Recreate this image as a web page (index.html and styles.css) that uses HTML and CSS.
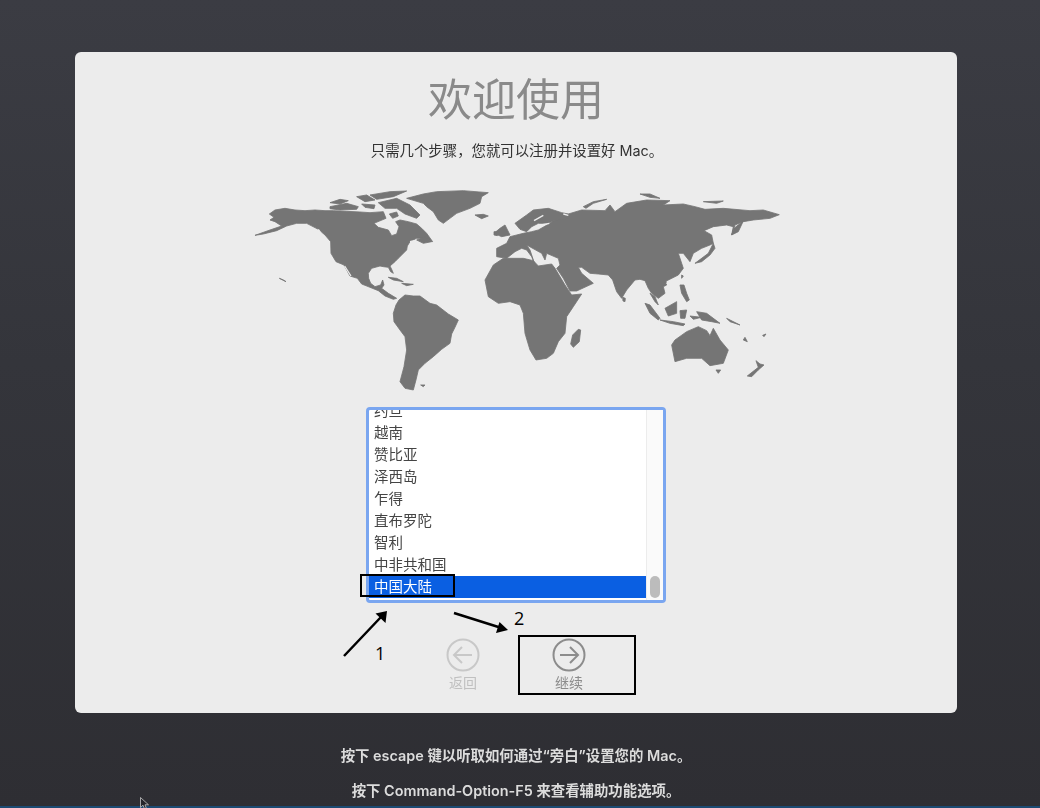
FILE: index.html
```html
<!DOCTYPE html>
<html lang="zh-CN">
<head>
<meta charset="utf-8">
<title>欢迎使用</title>
<link rel="stylesheet" href="styles.css">
</head>
<body>
<main class="card">
  <h1 class="title">欢迎使用</h1>
  <p class="subtitle">只需几个步骤，您就可以注册并设置好 Mac。</p>
  <svg class="map" viewBox="250 190 532 210" width="532" height="210" aria-hidden="true">
    <g transform="translate(250 190) scale(.3333)">
      <path d="M58 72L75 60L105 55L135 60L165 62L195 60L225 62L250 62L290 64L330 66L360 68L400 65L408 85L372 100L385 112L415 120L425 137L440 132L447 110L437 95L450 90L475 95L500 102L515 115L530 130L548 155L525 145L500 145L480 155L472 168L470 180L445 205L435 215L420 228L425 238L430 250L422 245L415 232L400 230L390 228L365 235L355 250L356 265L362 280L375 290L392 285L398 270L402 285L395 295L415 310L440 325L430 328L405 318L385 302L360 292L335 282L322 265L300 258L282 225L258 215L243 190L242 155L225 135L205 118L170 100L140 100L110 108L80 122L40 132L15 136L60 120L95 108L75 95L60 90L72 82Z"/>
      <path class="cut" d="M284 228L303 258M480 155L510 148M205 118L213 130"/>
      <path d="M240 38L270 28L295 32L270 42ZM240 50L290 40L325 50L320 58L270 60L240 56ZM320 20L350 15L375 30L345 35ZM360 15L420 5L470 3L430 20L380 28ZM385 38L440 25L480 45L510 75L500 85L465 72L440 55L405 55ZM335 42L375 45L372 56L345 52ZM418 72L440 66L445 78L428 85Z"/>
      <path d="M470 25L520 12L560 5L640 2L715 8L695 20L690 40L660 55L620 70L580 100L565 90L550 65L530 50L520 40ZM675 75L700 73L715 78L695 86ZM500 150L525 140L545 155L520 160ZM415 262L440 265L460 275L430 270ZM455 280L490 283L470 287ZM88 265L108 275L100 270Z"/>
      <path d="M430 370L438 345L447 330L465 315L490 318L510 318L540 340L560 345L595 372L625 390L615 412L605 432L600 460L575 478L550 500L525 520L505 540L498 570L490 600L465 595L450 575L462 530L470 480L465 440L450 420L432 395ZM512 585L525 585L520 590Z"/>
    </g>
    <g transform="translate(510 190) scale(.3333)">
      <path d="M-40 175L-10 160L0 140L40 130L65 125L85 120L120 100L140 85L175 72L215 60L285 62L300 45L315 65L350 40L410 30L480 32L460 45L520 42L555 50L585 58L640 55L720 62L760 60L808 74L780 85L730 90L700 95L675 105L665 135L670 110L650 105L610 110L582 122L605 135L610 160L600 165L575 175L550 190L540 215L520 190L505 190L515 220L520 235L505 255L465 275L470 285L460 290L465 310L445 325L425 310L415 295L405 272L390 268L375 270L350 300L335 325L320 305L308 270L295 255L265 252L240 250L215 232L205 232L215 250L250 280L200 303L180 303L160 265L140 235L150 225L145 205L110 190L105 210L95 190L50 165L60 180L75 225L65 200L50 180L35 175L15 185L-10 205L-40 200Z"/>
      <path d="M15 100L50 75L70 60L115 55L155 68L175 72L180 85L135 90L115 100L85 100L65 110L50 125L30 118Z"/>
      <path class="cut" d="M72 92L100 76M66 120L85 106L118 100M160 72L175 76"/>
      <path d="M-20 205L-50 225L-75 270L-65 320L-35 340L0 335L30 345L40 370L45 430L60 480L78 510L110 505L130 490L145 455L165 430L170 380L190 350L215 312L185 315L165 285L135 235L125 222L85 228L70 212L40 205L0 205Z"/>
      <path d="M-48 130L-30 115L-15 105L0 135L-25 140ZM-48 125L-35 125L-38 137L-48 135Z"/>
      <path d="M205 418L212 420L208 455L190 472L182 462L188 435ZM338 322L346 325L345 335L339 333Z"/>
      <path d="M220 50L250 35L290 28L250 40L228 55ZM580 35L640 33L620 40ZM390 12L420 12L450 25L420 22ZM555 220L595 190L610 160L615 175L600 195L575 215ZM665 135L672 115L700 93L685 125Z"/>
      <path d="M420 310L435 320L445 345L435 335ZM405 340L420 345L450 385L445 390L420 370ZM450 390L490 395L525 402L520 407L480 400ZM465 355L500 335L500 370L475 378ZM510 362L530 360L525 385L512 385ZM510 285L522 285L530 310L538 330L530 335L515 310ZM560 365L590 370L630 400L605 395L575 390ZM515 255L520 258L515 265ZM462 272L470 276L463 282ZM540 378L575 382L550 388ZM650 385L690 405L660 395ZM700 450L712 455L705 442ZM758 436L768 432L762 440Z"/>
      <path d="M485 465L495 450L530 425L565 410L590 422L600 437L610 415L630 450L655 480L640 520L600 527L575 505L530 505L495 515ZM618 540L632 540L625 550ZM738 512L750 522L762 525L745 540L725 560L712 558L745 532Z"/>
    </g>
  </svg>
  <div class="picker">
    <ul class="list">
      <li class="row">约旦</li>
      <li class="row">越南</li>
      <li class="row">赞比亚</li>
      <li class="row">泽西岛</li>
      <li class="row">乍得</li>
      <li class="row">直布罗陀</li>
      <li class="row">智利</li>
      <li class="row">中非共和国</li>
      <li class="row selected">中国大陆</li>
    </ul>
    <div class="track"><span class="thumb"></span></div>
  </div>
  <nav class="nav">
    <div class="step disabled">
      <svg class="circle" viewBox="0 0 34 34" width="34" height="34" aria-hidden="true"><circle cx="17" cy="17" r="15.5"/><path d="M26 17H8M16 9l-8 8 8 8"/></svg>
      <span class="step-label">返回</span>
    </div>
    <div class="step">
      <svg class="circle" viewBox="0 0 34 34" width="34" height="34" aria-hidden="true"><circle cx="17" cy="17" r="15.5"/><path d="M8 17H26M18 9l8 8-8 8"/></svg>
      <span class="step-label">继续</span>
    </div>
  </nav>
</main>
<footer class="hints">
  <p class="hint">按下 escape 键以听取如何通过“旁白”设置您的 Mac。</p>
  <p class="hint">按下 Command-Option-F5 来查看辅助功能选项。</p>
</footer>
<div class="strip"></div>

<div class="mark mark-row"></div>
<div class="mark mark-next"></div>
<svg class="arrows" viewBox="0 0 1040 808" width="1040" height="808" aria-hidden="true">
  <path class="arrow-line" d="M344 656L381 617M454 613L500 627.5"/>
  <path d="M387 611L385.5 623L375.5 613.5ZM508 630L496 633L499.5 622Z"/>
</svg>
<span class="num num-1">1</span>
<span class="num num-2">2</span>
<svg class="cursor" viewBox="0 0 12 14" width="12" height="14" aria-hidden="true"><path d="M.5.5V10.5L3 8.2L5 13H7L5 7.8H8.5Z"/></svg>
</body>
</html>
```

FILE: styles.css
```css
html, body {
  margin: 0;
  padding: 0;
}

body {
  position: relative;
  width: 1040px;
  height: 808px;
  overflow: hidden;
  background: linear-gradient(180deg, #3b3c43 0%, #34353b 45%, #2e2e33 100%);
  font-family: "Inter", "Noto Sans CJK SC", sans-serif;
  padding-top: 52px;
  box-sizing: border-box;
}

.card {
  box-sizing: border-box;
  width: 882px;
  height: 661px;
  margin-left: 75px;
  padding-top: 22px;
  background: #ececec;
  border-radius: 6px;
  display: flex;
  flex-direction: column;
  align-items: center;
}

.title {
  margin: 0;
  font-size: 44px;
  font-weight: 400;
  line-height: 52px;
  color: #8a8a8a;
  filter: blur(.4px);
}

.subtitle {
  margin: 15px 0 0;
  font-size: 14.4px;
  line-height: 20px;
  color: #333;
  transform: translateX(1px);
  filter: blur(.4px);
}

.map {
  display: block;
  margin-top: 29px;
  fill: #757575;
  stroke: #757575;
  stroke-width: 2.5;
  stroke-linejoin: round;
  filter: blur(.5px);
}

.cut {
  fill: none;
  stroke: #ececec;
  stroke-width: 4;
}

.picker {
  box-sizing: border-box;
  display: flex;
  width: 300px;
  height: 196px;
  margin-top: 7px;
  border: 3px solid #7aa6f0;
  border-radius: 4px;
  background: #fff;
  filter: blur(.3px);
}

.list {
  flex: 1;
  margin: 0;
  padding: 0;
  list-style: none;
  overflow: hidden;
}

.row {
  height: 22px;
  line-height: 22px;
  padding-left: 5px;
  font-size: 14.5px;
  color: #444;
}

.row:first-child {
  margin-top: -10px;
}

.selected {
  background: #0a5fe2;
  color: #fff;
}

.track {
  box-sizing: border-box;
  display: flex;
  flex-direction: column;
  justify-content: flex-end;
  align-items: center;
  width: 17px;
  padding-bottom: 2px;
  background: #fafafa;
  border-left: 1px solid #ececec;
}

.thumb {
  width: 10px;
  height: 22px;
  border-radius: 5px;
  background: #bcbcbc;
}

.nav {
  display: flex;
  gap: 46px;
  margin-top: 35px;
}

.step {
  display: flex;
  flex-direction: column;
  align-items: center;
  width: 60px;
  color: #8c8c8c;
  stroke: #8c8c8c;
}

.disabled {
  color: #c0c0c0;
  stroke: #c8c8c8;
}

.circle {
  display: block;
  fill: none;
  stroke-width: 2;
  filter: blur(.3px);
}

.step-label {
  margin-top: 1px;
  font-size: 14px;
  line-height: 20px;
  stroke: none;
  filter: blur(.4px);
}

.hints {
  width: 882px;
  margin: 33px 0 0 75px;
}

.hint {
  margin: 0 0 15px;
  text-align: center;
  font-size: 14.4px;
  font-weight: 600;
  line-height: 20px;
  color: #dcdcdc;
  filter: blur(.4px);
}

.strip {
  position: absolute;
  left: 0;
  right: 0;
  bottom: 0;
  height: 2px;
  background: #1b4a72;
}

.mark {
  position: absolute;
  box-sizing: border-box;
  border: 2px solid #000;
}

.mark-row {
  left: 360px;
  top: 574px;
  width: 95px;
  height: 23px;
}

.mark-next {
  left: 518px;
  top: 635px;
  width: 118px;
  height: 60px;
}

.arrows {
  position: absolute;
  left: 0;
  top: 0;
  fill: #000;
}

.arrow-line {
  fill: none;
  stroke: #000;
  stroke-width: 2.5;
}

.num {
  position: absolute;
  font-family: "Open Sans", sans-serif;
  font-size: 18px;
  line-height: 24px;
  color: #000;
}

.num-1 {
  left: 375px;
  top: 641px;
}

.num-2 {
  left: 514px;
  top: 606px;
}

.cursor {
  position: absolute;
  left: 140px;
  top: 797px;
  fill: #26262b;
  stroke: #c8c8c8;
  stroke-width: .8;
}
```
